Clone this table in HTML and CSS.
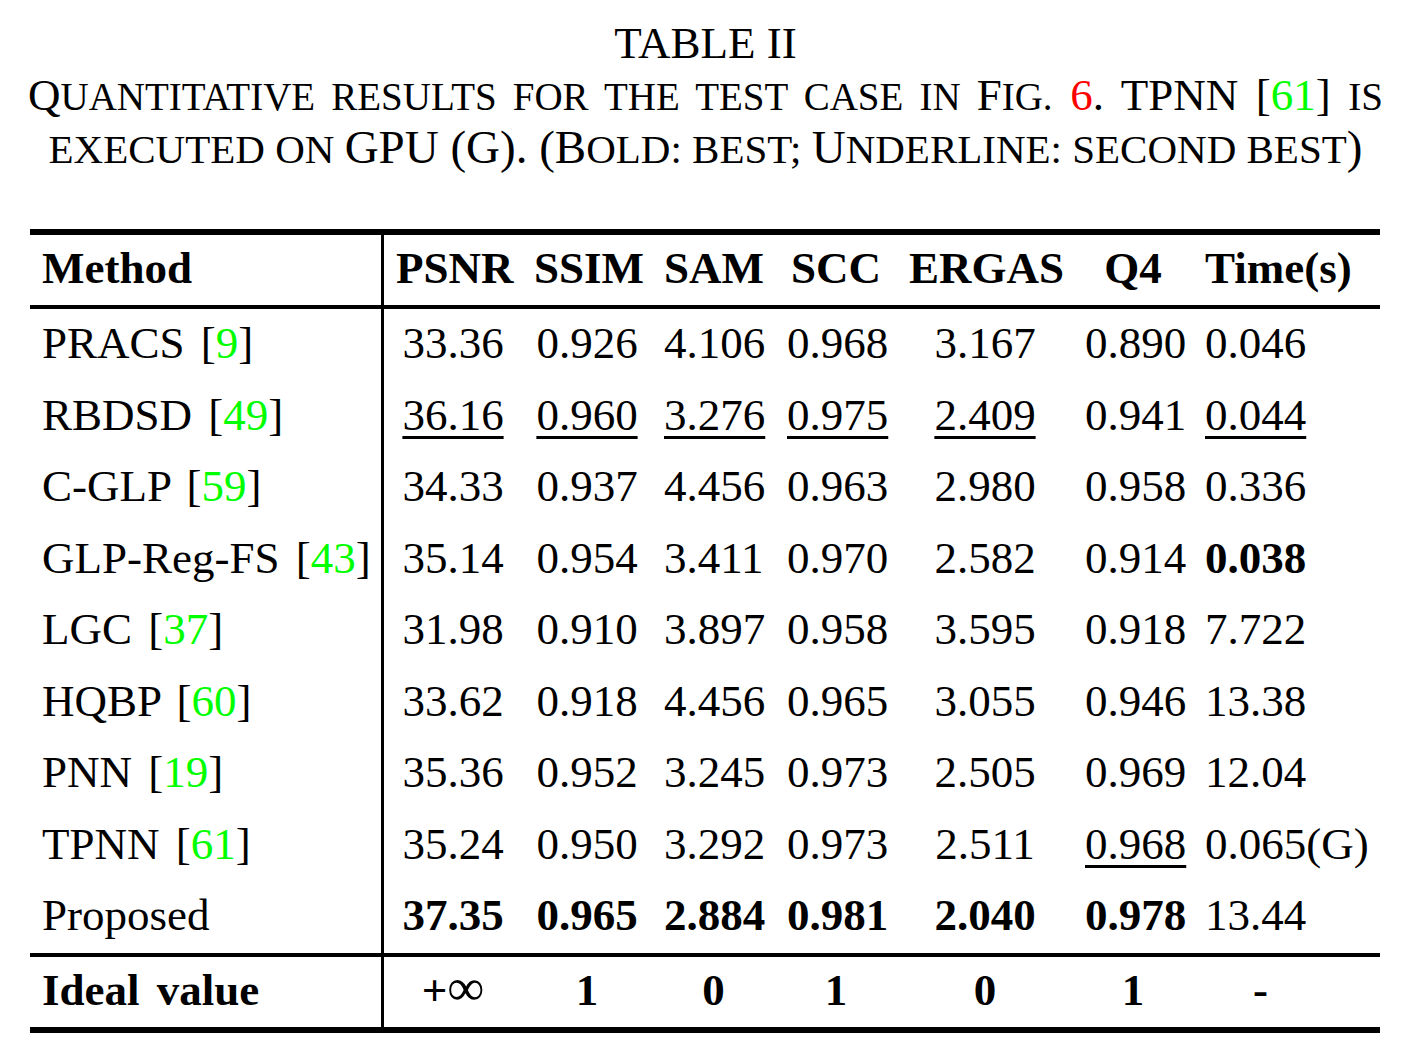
FILE: index.html
```html
<!DOCTYPE html>
<html lang="en">
<head>
<meta charset="utf-8">
<title>Table II</title>
<link rel="stylesheet" href="styles.css">
</head>
<body>
<div class="page">
  <h1 class="title">TABLE II</h1>
  <p class="caption">
    <span class="cap-line l1">Q<span class="sc">uantitative results for the test case in </span>F<span class="sc">ig.</span> <span class="red">6</span>. TPNN [<span class="ref">61</span>] <span class="sc">is</span></span>
    <span class="cap-line l2"><span class="sc">executed on </span>GPU (G). (B<span class="sc">old: best; </span>U<span class="sc">nderline: second best</span>)</span>
  </p>
  <table class="results">
    <thead>
      <tr>
        <th class="method w-method">Method</th>
        <th class="w-psnr">PSNR</th>
        <th class="w-ssim">SSIM</th>
        <th class="w-sam">SAM</th>
        <th class="w-scc">SCC</th>
        <th class="w-ergas">ERGAS</th>
        <th class="w-q4">Q4</th>
        <th class="time w-time">Time(s)</th>
      </tr>
    </thead>
    <tbody>
      <tr>
        <td class="method">PRACS [<span class="ref">9</span>]</td>
        <td>33.36</td><td>0.926</td><td>4.106</td><td>0.968</td><td>3.167</td><td>0.890</td><td class="time">0.046</td>
      </tr>
      <tr>
        <td class="method">RBDSD [<span class="ref">49</span>]</td>
        <td><span class="u">36.16</span></td><td><span class="u">0.960</span></td><td><span class="u">3.276</span></td><td><span class="u">0.975</span></td><td><span class="u">2.409</span></td><td>0.941</td><td class="time"><span class="u">0.044</span></td>
      </tr>
      <tr>
        <td class="method">C-GLP [<span class="ref">59</span>]</td>
        <td>34.33</td><td>0.937</td><td>4.456</td><td>0.963</td><td>2.980</td><td>0.958</td><td class="time">0.336</td>
      </tr>
      <tr>
        <td class="method">GLP-Reg-FS [<span class="ref">43</span>]</td>
        <td>35.14</td><td>0.954</td><td>3.411</td><td>0.970</td><td>2.582</td><td>0.914</td><td class="time b">0.038</td>
      </tr>
      <tr>
        <td class="method">LGC [<span class="ref">37</span>]</td>
        <td>31.98</td><td>0.910</td><td>3.897</td><td>0.958</td><td>3.595</td><td>0.918</td><td class="time">7.722</td>
      </tr>
      <tr>
        <td class="method">HQBP [<span class="ref">60</span>]</td>
        <td>33.62</td><td>0.918</td><td>4.456</td><td>0.965</td><td>3.055</td><td>0.946</td><td class="time">13.38</td>
      </tr>
      <tr>
        <td class="method">PNN [<span class="ref">19</span>]</td>
        <td>35.36</td><td>0.952</td><td>3.245</td><td>0.973</td><td>2.505</td><td>0.969</td><td class="time">12.04</td>
      </tr>
      <tr>
        <td class="method">TPNN [<span class="ref">61</span>]</td>
        <td>35.24</td><td>0.950</td><td>3.292</td><td>0.973</td><td>2.511</td><td><span class="u">0.968</span></td><td class="time">0.065(G)</td>
      </tr>
      <tr>
        <td class="method">Proposed</td>
        <td class="b">37.35</td><td class="b">0.965</td><td class="b">2.884</td><td class="b">0.981</td><td class="b">2.040</td><td class="b">0.978</td><td class="time">13.44</td>
      </tr>
    </tbody>
    <tfoot>
      <tr>
        <td class="method ideal-label">Ideal value</td>
        <td>+<span class="inf">∞</span></td><td>1</td><td>0</td><td>1</td><td>0</td><td>1</td><td class="time dash">-</td>
      </tr>
    </tfoot>
  </table>
</div>
</body>
</html>
```

FILE: styles.css
```css
html, body {
  margin: 0;
  padding: 0;
  background: #ffffff;
}

body {
  color: #000000;
  font-family: "Liberation Serif", "Times New Roman", serif;
}

.page {
  width: 1415px;
}

.title {
  margin: 0;
  padding: 17px 32px 0 28px;
  font-size: 45px;
  font-weight: normal;
  line-height: 52px;
  text-align: center;
}

.caption {
  margin: 0;
  padding: 0 32px 0 28px;
  font-size: 45px;
  line-height: 52px;
}

.cap-line {
  display: block;
  white-space: nowrap;
}

.l1 {
  text-align: justify;
  text-align-last: justify;
  white-space: normal;
}

.l2 {
  text-align: center;
  font-size: 47px;
}

.sc {
  text-transform: uppercase;
  line-height: 1;
}

.l1 .sc {
  font-size: 39px;
}

.l2 .sc {
  font-size: 41px;
}

.red {
  color: #ff0000;
}

.ref {
  color: #00ff00;
}

.results {
  margin: 56px 0 0 30px;
  width: 1350px;
  table-layout: fixed;
  border-collapse: separate;
  border-spacing: 0;
}

.results th,
.results td {
  box-sizing: border-box;
  padding: 0 12px;
  text-align: center;
  white-space: nowrap;
  vertical-align: top;
}

.results thead th {
  border-top: 6px solid #000;
  border-bottom: 4px solid #000;
  font-size: 45px;
  font-weight: bold;
  line-height: 66px;
  padding-bottom: 4px;
}

.results tbody td {
  font-size: 45px;
  line-height: 69.5px;
  padding-bottom: 2px;
}

.results tfoot td {
  border-top: 4px solid #000;
  border-bottom: 6px solid #000;
  font-size: 45px;
  font-weight: bold;
  line-height: 66px;
  padding-bottom: 4px;
}

.results .method {
  text-align: left;
  border-right: 3px solid #000;
}

.results tbody .method {
  word-spacing: 5px;
}

.results .time {
  text-align: left;
}

.results .dash {
  padding-left: 60px;
}

.ideal-label {
  word-spacing: 6px;
}

.inf {
  font-weight: normal;
  font-size: 52px;
  line-height: 1;
}

.b {
  font-weight: bold;
}

.u {
  text-decoration: underline;
  text-decoration-thickness: 3px;
  text-underline-offset: 6px;
}

.w-method { width: 354px; }
.w-psnr { width: 138px; }
.w-ssim { width: 130px; }
.w-sam { width: 123px; }
.w-scc { width: 122px; }
.w-ergas { width: 176px; }
.w-q4 { width: 120px; }
.w-time { width: 187px; }
```
